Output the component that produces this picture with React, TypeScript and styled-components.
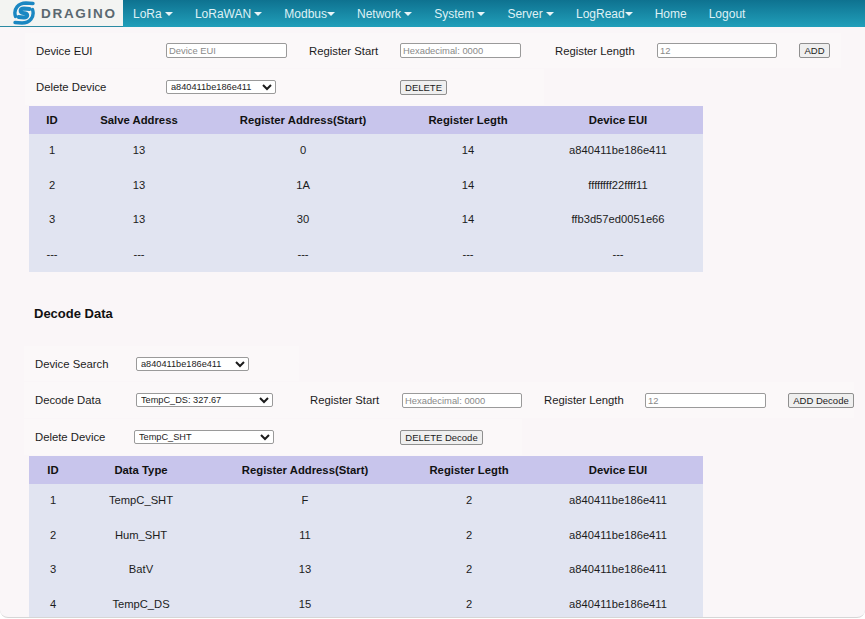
import React from 'react';
import styled, { createGlobalStyle } from 'styled-components';

const GlobalStyle = createGlobalStyle`
  html, body {
    margin: 0;
    padding: 0;
    height: 100%;
    overflow: hidden;
    background: #ffffff;
    font-family: "Liberation Sans", Arial, sans-serif;
  }
`;

const Page = styled.div`
  height: 617px;
  overflow: hidden;
  background: #faf6f8;
  border-bottom: 1px solid #d6d6d6;
  border-radius: 0 0 8px 8px;
  box-sizing: content-box;
`;

const NavBar = styled.nav`
  display: flex;
  align-items: stretch;
  height: 27px;
  background: linear-gradient(#0e7290, #219fba);
`;

const LogoBox = styled.div`
  display: flex;
  align-items: center;
  gap: 5px;
  width: 123px;
  box-sizing: border-box;
  padding-left: 12px;
  background: #f3f4f2;
  border-bottom: 1px solid #2a8aa3;
`;

const LogoText = styled.span`
  font-size: 13.5px;
  font-weight: 700;
  letter-spacing: 1.7px;
  color: #5a6870;
`;

const NavList = styled.div`
  display: flex;
  align-items: center;
  gap: 22px;
  padding-left: 10px;
`;

const NavItem = styled.span`
  display: flex;
  align-items: center;
  font-size: 12px;
  color: #dff1f5;
  white-space: nowrap;
`;

const Caret = styled.i<{ $tight?: boolean }>`
  width: 0;
  height: 0;
  margin-left: ${({ $tight }) => ($tight ? '0' : '3.2px')};
  border-left: 4px solid transparent;
  border-right: 4px solid transparent;
  border-top: 4px solid #e8f5f8;
`;

const Main = styled.main`
  padding-top: 6px;
`;

const FormRow = styled.div<{ $cols: string; $left: number; $height: number }>`
  display: grid;
  grid-template-columns: ${({ $cols }) => $cols};
  width: max-content;
  margin-left: ${({ $left }) => $left}px;
  margin-bottom: 1px;
  height: ${({ $height }) => $height}px;
`;

const Cell = styled.div<{ $pad?: number }>`
  display: flex;
  align-items: center;
  padding-left: ${({ $pad = 11 }) => $pad}px;
  background: #fbf8f9;
  font-size: 11.3px;
  color: #1c1c1c;
  white-space: nowrap;
`;

const TextInput = styled.input<{ $width: number }>`
  width: ${({ $width }) => $width}px;
  height: 15px;
  box-sizing: border-box;
  padding: 0 2px;
  border: 1px solid #9a9a9a;
  border-radius: 2px;
  background: #ffffff;
  font-family: inherit;
  font-size: 9.4px;
  color: #777777;
  outline: none;

  &::placeholder {
    color: #8a8a8a;
    opacity: 1;
  }
`;

const SelectBox = styled.select<{ $width: number }>`
  width: ${({ $width }) => $width}px;
  height: 14px;
  box-sizing: border-box;
  padding: 0;
  border: 1px solid #9a9a9a;
  border-radius: 2px;
  background: #ffffff;
  font-family: inherit;
  font-size: 9.2px;
  color: #1c1c1c;
`;

const ActionButton = styled.button<{ $width: number }>`
  width: ${({ $width }) => $width}px;
  height: 15px;
  box-sizing: border-box;
  padding: 0;
  border: 1px solid #8f8f8f;
  border-radius: 2px;
  background: #efefef;
  font-family: inherit;
  font-size: 9.5px;
  color: #1c1c1c;
`;

const SectionTitle = styled.h2`
  margin: 0;
  padding: 33px 0 23px 34px;
  font-size: 13px;
  line-height: 18px;
  font-weight: 700;
  color: #111111;
`;

const DataTable = styled.table`
  width: 674px;
  margin-left: 29px;
  border-collapse: collapse;
  table-layout: fixed;
`;

const HeadCell = styled.th`
  height: 28px;
  padding: 0;
  background: #c8c5ec;
  font-size: 11.3px;
  font-weight: 700;
  text-align: center;
  color: #111111;
`;

const BodyCell = styled.td`
  height: 34.5px;
  box-sizing: border-box;
  padding: 0 0 2px;
  background: #e1e4f1;
  font-size: 11.2px;
  text-align: center;
  color: #1c1c1c;
`;

const navItems = [
  { label: 'LoRa', caret: true },
  { label: 'LoRaWAN', caret: true },
  { label: 'Modbus', caret: true, tight: true },
  { label: 'Network', caret: true },
  { label: 'System', caret: true },
  { label: 'Server', caret: true },
  { label: 'LogRead', caret: true, tight: true },
  { label: 'Home' },
  { label: 'Logout' },
];

const deviceRows = [
  ['1', '13', '0', '14', 'a840411be186e411'],
  ['2', '13', '1A', '14', 'ffffffff22ffff11'],
  ['3', '13', '30', '14', 'ffb3d57ed0051e66'],
  ['---', '---', '---', '---', '---'],
];

const decodeRows = [
  ['1', 'TempC_SHT', 'F', '2', 'a840411be186e411'],
  ['2', 'Hum_SHT', '11', '2', 'a840411be186e411'],
  ['3', 'BatV', '13', '2', 'a840411be186e411'],
  ['4', 'TempC_DS', '15', '2', 'a840411be186e411'],
];

const LogoMark = () => (
  <svg width="24" height="24" viewBox="0 0 24 24" fill="none" stroke="#1a87c2" strokeLinecap="round">
    <path d="M3.5 15.5 C1 8 6.5 2 14 2 L21 2.5" strokeWidth="3.4" />
    <path d="M20.5 8.5 C23 16 17.5 22 10 22 L3 21.5" strokeWidth="3.4" />
    <path d="M17.5 8 L12 7.5 C7.5 7.5 7.5 11.5 11.5 12 C16.5 12.5 16.5 16.5 12 16.5 L6.5 16" strokeWidth="3.8" />
  </svg>
);

const RecordsTable: React.FC<{ widths: number[]; heads: string[]; rows: string[][] }> = ({ widths, heads, rows }) => (
  <DataTable>
    <colgroup>
      {widths.map((w, i) => (
        <col key={i} width={w} />
      ))}
    </colgroup>
    <thead>
      <tr>
        {heads.map((h) => (
          <HeadCell key={h}>{h}</HeadCell>
        ))}
      </tr>
    </thead>
    <tbody>
      {rows.map((row, i) => (
        <tr key={i}>
          {row.map((value, j) => (
            <BodyCell key={j}>{value}</BodyCell>
          ))}
        </tr>
      ))}
    </tbody>
  </DataTable>
);

const App: React.FC = () => {
  return (
    <Page>
      <GlobalStyle />
      <NavBar>
        <LogoBox>
          <LogoMark />
          <LogoText>DRAGINO</LogoText>
        </LogoBox>
        <NavList>
          {navItems.map(({ label, caret, tight }) => (
            <NavItem key={label}>
              {label}
              {caret && <Caret $tight={tight} />}
            </NavItem>
          ))}
        </NavList>
      </NavBar>
      <Main>
        <FormRow $left={25} $height={35} $cols="130px 143px 91px 155px 102px 142px 53px">
          <Cell>Device EUI</Cell>
          <Cell>
            <TextInput $width={121} placeholder="Device EUI" />
          </Cell>
          <Cell>Register Start</Cell>
          <Cell>
            <TextInput $width={121} placeholder="Hexadecimal: 0000" />
          </Cell>
          <Cell>Register Length</Cell>
          <Cell>
            <TextInput $width={120} placeholder="12" />
          </Cell>
          <Cell>
            <ActionButton $width={31}>ADD</ActionButton>
          </Cell>
        </FormRow>
        <FormRow $left={25} $height={36} $cols="130px 143px 91px 155px">
          <Cell>Delete Device</Cell>
          <Cell>
            <SelectBox $width={110} defaultValue="a840411be186e411">
              <option>a840411be186e411</option>
            </SelectBox>
          </Cell>
          <Cell />
          <Cell>
            <ActionButton $width={47}>DELETE</ActionButton>
          </Cell>
        </FormRow>
        <RecordsTable
          widths={[46, 128, 200, 130, 170]}
          heads={['ID', 'Salve Address', 'Register Address(Start)', 'Register Legth', 'Device EUI']}
          rows={deviceRows}
        />
        <SectionTitle>Decode Data</SectionTitle>
        <FormRow $left={24} $height={35} $cols="100px 175px">
          <Cell>Device Search</Cell>
          <Cell $pad={12}>
            <SelectBox $width={113} defaultValue="a840411be186e411">
              <option>a840411be186e411</option>
            </SelectBox>
          </Cell>
        </FormRow>
        <FormRow $left={24} $height={36} $cols="101px 174px 92px 142px 101px 143px 77px">
          <Cell>Decode Data</Cell>
          <Cell>
            <SelectBox $width={137} defaultValue="TempC_DS: 327.67">
              <option>TempC_DS: 327.67</option>
            </SelectBox>
          </Cell>
          <Cell>Register Start</Cell>
          <Cell>
            <TextInput $width={120} placeholder="Hexadecimal: 0000" />
          </Cell>
          <Cell>Register Length</Cell>
          <Cell>
            <TextInput $width={121} placeholder="12" />
          </Cell>
          <Cell>
            <ActionButton $width={66}>ADD Decode</ActionButton>
          </Cell>
        </FormRow>
        <FormRow $left={24} $height={36} $cols="100px 176px 92px 130px">
          <Cell>Delete Device</Cell>
          <Cell $pad={10}>
            <SelectBox $width={140} defaultValue="TempC_SHT">
              <option>TempC_SHT</option>
            </SelectBox>
          </Cell>
          <Cell />
          <Cell $pad={8}>
            <ActionButton $width={83}>DELETE Decode</ActionButton>
          </Cell>
        </FormRow>
        <RecordsTable
          widths={[48, 128, 200, 128, 170]}
          heads={['ID', 'Data Type', 'Register Address(Start)', 'Register Legth', 'Device EUI']}
          rows={decodeRows}
        />
      </Main>
    </Page>
  );
};

export default App;
